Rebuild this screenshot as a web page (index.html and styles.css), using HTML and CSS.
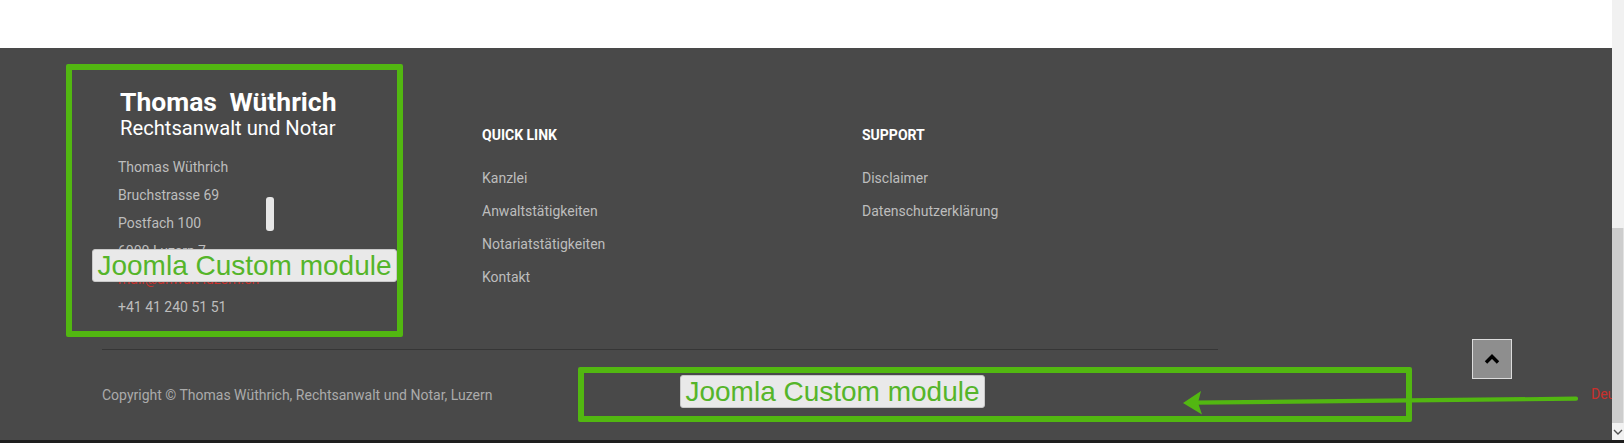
FILE: index.html
```html
<!DOCTYPE html>
<html lang="de">
<head>
<meta charset="utf-8">
<title>Thomas Wüthrich – Footer</title>
<link rel="stylesheet" href="styles.css">
</head>
<body>
<div class="screen">
  <div class="viewport">
    <div class="page">
      <div class="page-top"></div>
      <footer class="footer">
        <div class="footer-inner">
          <div class="footer-cols">
            <div class="col col-brand">
              <div class="brand-title"><span>Thomas</span> <span>Wüthrich</span></div>
              <div class="brand-sub">Rechtsanwalt und Notar</div>
              <ul class="address">
                <li>Thomas Wüthrich</li>
                <li>Bruchstrasse 69</li>
                <li>Postfach 100</li>
                <li>6000 Luzern 7</li>
                <li class="mail">mail@anwalt-luzern.ch</li>
                <li>+41 41 240 51 51</li>
              </ul>
            </div>
            <div class="col col-links">
              <h4 class="col-head">QUICK LINK</h4>
              <ul class="links">
                <li>Kanzlei</li>
                <li>Anwaltstätigkeiten</li>
                <li>Notariatstätigkeiten</li>
                <li>Kontakt</li>
              </ul>
            </div>
            <div class="col col-links">
              <h4 class="col-head">SUPPORT</h4>
              <ul class="links">
                <li>Disclaimer</li>
                <li>Datenschutzerklärung</li>
              </ul>
            </div>
          </div>
          <div class="divider"></div>
          <div class="copyright">Copyright © Thomas Wüthrich, Rechtsanwalt und Notar, Luzern</div>
        </div>
      </footer>

      <div class="pill"></div>
      <a class="to-top" href="#">
        <svg width="16" height="10" viewBox="0 0 16 10"><polyline points="2,8.5 8,2.5 14,8.5" fill="none" stroke="#000" stroke-width="3.4"/></svg>
      </a>
      <div class="lang">Deutsch</div>

      <div class="anno-box anno-box-1"></div>
      <div class="anno-label anno-label-1">Joomla Custom module</div>
      <div class="anno-box anno-box-2"></div>
      <div class="anno-label anno-label-2">Joomla Custom module</div>
      <svg class="anno-arrow" width="1624" height="443" viewBox="0 0 1624 443">
        <line x1="1576" y1="398.7" x2="1194" y2="402.6" stroke="#52b711" stroke-width="4.2" stroke-linecap="round"/>
        <polygon points="1183,403 1201,391 1198,402.8 1202,414.5" fill="#52b711"/>
      </svg>
    </div>
    <div class="scrollbar">
      <div class="sb-track"></div>
      <div class="sb-thumb"></div>
      <div class="sb-arrow">
        <svg width="10" height="6" viewBox="0 0 10 6"><polyline points="1,1 5,5 9,1" fill="none" stroke="#505050" stroke-width="1.4"/></svg>
      </div>
    </div>
  </div>
  <div class="bottom-strip"></div>
</div>
</body>
</html>
```

FILE: styles.css
```css
* { box-sizing: border-box; }
html, body { margin: 0; padding: 0; }
body {
  width: 1624px;
  height: 443px;
  overflow: hidden;
  font-family: Roboto, "Liberation Sans", Arial, sans-serif;
  background: #ffffff;
}
ul { list-style: none; margin: 0; padding: 0; }
h4 { margin: 0; }

.screen { display: flex; flex-direction: column; width: 1624px; height: 443px; }
.viewport { display: flex; height: 440px; }
.page { position: relative; flex: 1; display: flex; flex-direction: column; overflow: hidden; }
.page-top { height: 48px; background: #ffffff; }

.footer { flex: 1; background: #494949; }
.footer-inner { width: 1116px; margin-left: 102px; padding-top: 39px; }
.footer-cols { display: grid; grid-template-columns: 380px 380px 1fr; }

.col-brand { padding-left: 16px; }
.brand-title {
  font-weight: 700;
  font-size: 26.5px;
  line-height: 29px;
  color: #ffffff;
  padding-left: 2px;
  word-spacing: 6px;
}
.brand-sub {
  font-size: 20.2px;
  line-height: 24px;
  color: #ffffff;
  padding-left: 2px;
}
.address { margin-top: 13px; }
.address li { font-size: 14px; line-height: 28px; color: #bdbdbd; }
.address li.mail { color: #c9302c; }

.col-links { padding-top: 38px; }
.col-head { font-size: 14px; line-height: 20px; font-weight: 700; color: #ffffff; }
.links { padding-top: 17px; }
.links li { font-size: 14px; line-height: 33px; color: #bdbdbd; }

.divider { height: 1px; background: #363636; margin-top: 28px; }
.copyright { margin-top: 35px; font-size: 14px; line-height: 20px; color: #ababab; }

.pill {
  position: absolute; left: 266px; top: 197px; width: 8px; height: 34px;
  background: #e6e6e6; border-radius: 3px;
}
.to-top {
  position: absolute; left: 1472px; top: 339px; width: 40px; height: 40px;
  background: #8e8e8e; border: 1px solid #dcdcdc;
  display: flex; align-items: center; justify-content: center;
}
.lang {
  position: absolute; left: 1591px; top: 384px;
  font-size: 14px; line-height: 20px; color: #c9302c; white-space: nowrap;
}

.anno-box {
  position: absolute; border: 6px solid #52b711; border-radius: 2px;
}
.anno-box-1 { left: 66px; top: 64px; width: 337px; height: 273px; }
.anno-box-2 { left: 578px; top: 367px; width: 834px; height: 55px; }
.anno-label {
  position: absolute; height: 33px; width: 305px;
  background: #e9e9e9; border: 1px solid #c8c8c8; border-radius: 3px;
  font-family: "Liberation Sans", Arial, sans-serif;
  font-size: 28px; line-height: 31px; color: #55b52a;
  text-align: center; white-space: nowrap;
}
.anno-label-1 { left: 92px; top: 249px; }
.anno-label-2 { left: 680px; top: 375px; }
.anno-arrow { position: absolute; left: 0; top: 0; pointer-events: none; }

.scrollbar { width: 12px; display: flex; flex-direction: column; }
.sb-track { height: 228px; background: #f1f1f1; }
.sb-thumb { flex: 1; background: #cdcdcd; border-right: 1px solid #e2e2e2; }
.sb-arrow { height: 17px; background: #f1f1f1; display: flex; align-items: center; justify-content: center; }

.bottom-strip { height: 3px; background: #1e1e1e; }
```
